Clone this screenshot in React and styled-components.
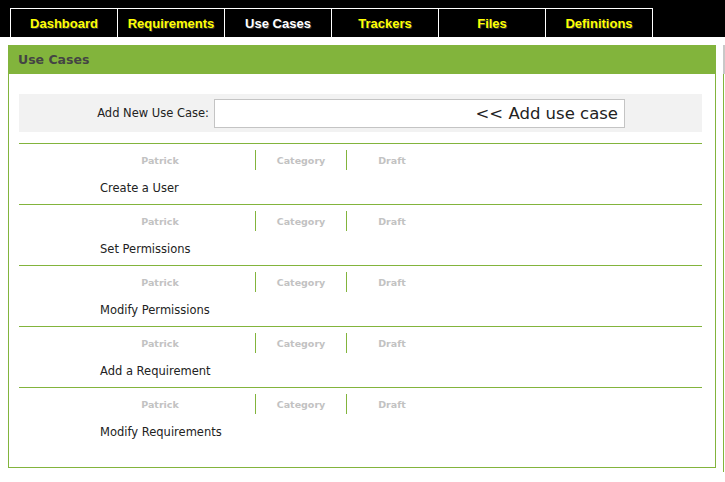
import React from 'react';
import styled, { createGlobalStyle } from 'styled-components';

const GlobalStyle = createGlobalStyle`
  html, body {
    margin: 0;
    padding: 0;
    background: #fff;
    overflow: hidden;
  }
  body {
    font-family: "DejaVu Sans", "Liberation Sans", sans-serif;
    color: #222;
  }
`;

const GREEN = '#82b43c';

const NavBar = styled.nav`
  display: flex;
  height: 37px;
  padding: 8px 0 0 10px;
  box-sizing: border-box;
  background: #000;
`;

const Tab = styled.a`
  box-sizing: border-box;
  width: 107px;
  height: 29px;
  display: flex;
  align-items: center;
  justify-content: center;
  border-top: 1px solid #fff;
  border-left: 1px solid #fff;
  &:last-child {
    border-right: 1px solid #fff;
    width: 108px;
  }
  font-family: "Liberation Sans", Arial, sans-serif;
  font-weight: bold;
  font-size: 13px;
  color: ${(p) => (p.$active ? '#fff' : '#ffff00')};
  text-shadow: 1px 1px 0 #333;
  text-decoration: none;
`;

const Layout = styled.div`
  display: flex;
  align-items: flex-start;
  margin-top: 8px;
  padding-left: 8px;
`;

const Panel = styled.section`
  width: 708px;
  flex-shrink: 0;
  box-sizing: border-box;
  border: 1px solid ${GREEN};
  border-top: none;
`;

const PanelHeader = styled.h2`
  margin: 0 -1px;
  height: 29px;
  background: ${GREEN};
  display: flex;
  align-items: center;
  padding-left: 10px;
  font-size: 12.5px;
  font-weight: bold;
  color: #444;
`;

const PanelBody = styled.div`
  padding: 20px 13px 19px 10px;
`;

const AddForm = styled.form`
  display: flex;
  align-items: center;
  height: 38px;
  background: #f2f2f2;
  margin: 0;
`;

const Label = styled.label`
  width: 190px;
  text-align: right;
  margin-right: 5px;
  font-size: 11.5px;
  color: #222;
`;

const Field = styled.div`
  display: flex;
  align-items: center;
  width: 411px;
  height: 29px;
  box-sizing: border-box;
  border: 1px solid #c4c4c4;
  background: #fff;
`;

const TextInput = styled.input`
  flex: 1;
  min-width: 0;
  border: none;
  outline: none;
  background: transparent;
`;

const AddButton = styled.button`
  border: none;
  background: transparent;
  padding: 0 6px 0 4px;
  font-family: "DejaVu Sans", sans-serif;
  font-size: 16.5px;
  color: #222;
  cursor: pointer;
`;

const List = styled.ul`
  list-style: none;
  margin: 11px 0 0;
  padding: 0;
`;

const Row = styled.li`
  height: 61px;
  box-sizing: border-box;
  border-top: 1px solid ${GREEN};
  padding-top: 6px;
`;

const Meta = styled.div`
  display: flex;
  height: 20px;
  margin-left: 46px;
`;

const MetaCell = styled.span`
  width: ${(p) => p.$w}px;
  display: flex;
  align-items: center;
  justify-content: center;
  border-left: ${(p) => (p.$divider ? `1px solid ${GREEN}` : 'none')};
  font-size: 9.5px;
  font-weight: bold;
  color: #c2c2c2;
`;

const Title = styled.div`
  margin: 10px 0 0 81px;
  line-height: 16px;
  font-size: 11.5px;
  color: #222;
`;

const Aside = styled.aside`
  margin-left: 7px;
  flex: 1;
  min-width: 0;
  height: 427px;
  border-left: 1px solid ${GREEN};
`;

const AsideHeader = styled.div`
  margin-left: -1px;
  height: 29px;
  background: #c8c8c8;
`;

const Footer = styled.footer`
  margin-top: 11px;
  border-top: 1px solid #eee;
  height: 4px;
`;

const tabs = ['Dashboard', 'Requirements', 'Use Cases', 'Trackers', 'Files', 'Definitions'];

const useCases = [
  'Create a User',
  'Set Permissions',
  'Modify Permissions',
  'Add a Requirement',
  'Modify Requirements',
];

const App = () => {
  return (
    <>
      <GlobalStyle />
      <NavBar>
        {tabs.map((t) => (
          <Tab key={t} href="#" $active={t === 'Use Cases'}>
            {t}
          </Tab>
        ))}
      </NavBar>
      <Layout>
        <Panel>
          <PanelHeader>Use Cases</PanelHeader>
          <PanelBody>
            <AddForm onSubmit={(e) => e.preventDefault()}>
              <Label htmlFor="new-use-case">Add New Use Case:</Label>
              <Field>
                <TextInput id="new-use-case" type="text" />
                <AddButton type="submit">&lt;&lt; Add use case</AddButton>
              </Field>
            </AddForm>
            <List>
              {useCases.map((name) => (
                <Row key={name}>
                  <Meta>
                    <MetaCell $w={190}>Patrick</MetaCell>
                    <MetaCell $w={90} $divider>Category</MetaCell>
                    <MetaCell $w={90} $divider>Draft</MetaCell>
                  </Meta>
                  <Title>{name}</Title>
                </Row>
              ))}
            </List>
          </PanelBody>
        </Panel>
        <Aside>
          <AsideHeader />
        </Aside>
      </Layout>
      <Footer />
    </>
  );
};

export default App;
